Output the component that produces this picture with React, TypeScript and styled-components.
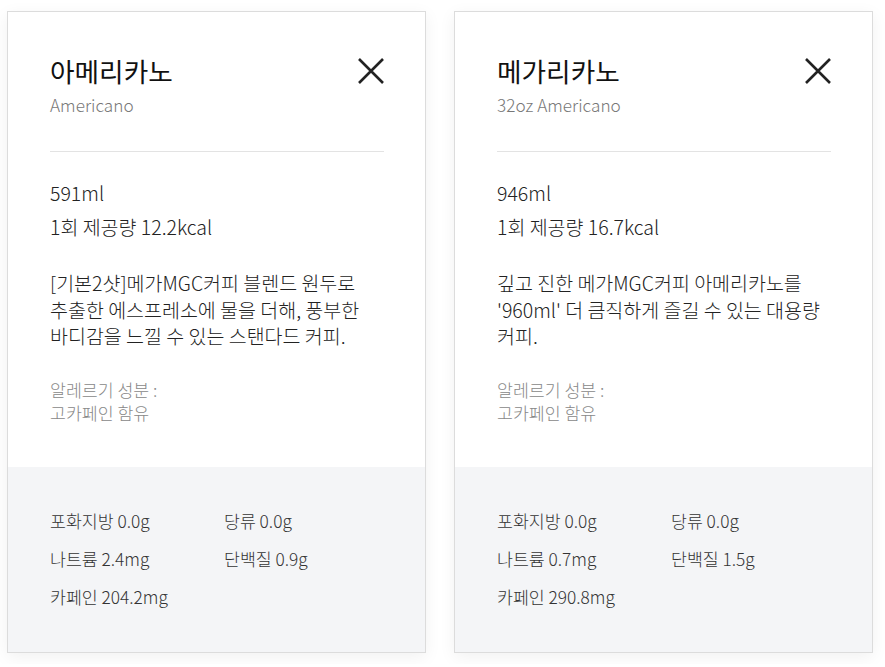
import React from "react";
import styled, { createGlobalStyle } from "styled-components";

const GlobalStyle = createGlobalStyle`
  html, body {
    margin: 0;
    padding: 0;
    background: #ffffff;
  }
  body {
    font-family: "Noto Sans CJK KR", "Noto Sans", sans-serif;
    color: #222;
  }
`;

type Menu = {
  name: string;
  engName: string;
  volume: string;
  kcal: string;
  desc: string;
  allergy: string;
  nutrition: string[];
};

const menus: Menu[] = [
  {
    name: "아메리카노",
    engName: "Americano",
    volume: "591ml",
    kcal: "1회 제공량 12.2kcal",
    desc: "[기본2샷]메가MGC커피 블렌드 원두로 추출한 에스프레소에 물을 더해, 풍부한 바디감을 느낄 수 있는 스탠다드 커피.",
    allergy: "고카페인 함유",
    nutrition: ["포화지방 0.0g", "당류 0.0g", "나트륨 2.4mg", "단백질 0.9g", "카페인 204.2mg"],
  },
  {
    name: "메가리카노",
    engName: "32oz Americano",
    volume: "946ml",
    kcal: "1회 제공량 16.7kcal",
    desc: "깊고 진한 메가MGC커피 아메리카노를 '960ml' 더 큼직하게 즐길 수 있는 대용량 커피.",
    allergy: "고카페인 함유",
    nutrition: ["포화지방 0.0g", "당류 0.0g", "나트륨 0.7mg", "단백질 1.5g", "카페인 290.8mg"],
  },
];

const Page = styled.div`
  display: flex;
  gap: 28px;
  padding: 11px 7px;
`;

const Card = styled.section`
  width: 419px;
  box-sizing: border-box;
  border: 1px solid #dcdcdc;
  background: #fff;
  box-shadow: 0 4px 16px rgba(0, 0, 0, 0.06);
  display: flex;
  flex-direction: column;
`;

const Top = styled.div`
  padding: 41px 41px 43px 42px;
`;

const Head = styled.div`
  display: flex;
  justify-content: space-between;
  align-items: flex-start;
  padding-bottom: 34px;
  border-bottom: 1px solid #e3e3e3;
`;

const Title = styled.h2`
  margin: 0;
  font-size: 26.7px;
  line-height: 36px;
  font-weight: 400;
  color: #111;
`;

const Sub = styled.div`
  margin-top: 4px;
  font-size: 17.2px;
  line-height: 24px;
  font-weight: 300;
  color: #777;
`;

const Close = styled.button`
  border: 0;
  background: none;
  padding: 0;
  margin-top: 5px;
  width: 26px;
  height: 26px;
  cursor: pointer;
  color: #222;
`;

const Info = styled.div`
  margin-top: 24px;
  font-size: 19.5px;
  line-height: 34px;
  font-weight: 300;
  color: #222;
`;

const Desc = styled.p`
  margin: 26px 0 0;
  font-size: 19.5px;
  line-height: 26.5px;
  font-weight: 300;
  color: #222;
  word-break: keep-all;
`;

const Allergy = styled.div`
  margin-top: 28px;
  font-size: 17.3px;
  line-height: 23px;
  font-weight: 300;
  color: #888;
`;

const Bottom = styled.div`
  flex: 1;
  background: #f4f5f7;
  padding: 35px 42px 36px;
`;

const NutriGrid = styled.ul`
  margin: 0;
  padding: 0;
  list-style: none;
  display: grid;
  grid-template-columns: 174px 174px;
`;

const Nutri = styled.li`
  font-size: 17.3px;
  line-height: 38px;
  font-weight: 300;
  color: #333;
`;

const CloseIcon = () => (
  <svg width="26" height="26" viewBox="0 0 26 26" fill="none">
    <path d="M1 1L25 25M25 1L1 25" stroke="currentColor" strokeWidth="2.6" />
  </svg>
);

const MenuCard = ({ menu }: { menu: Menu }) => (
  <Card>
    <Top>
      <Head>
        <div>
          <Title>{menu.name}</Title>
          <Sub>{menu.engName}</Sub>
        </div>
        <Close aria-label="닫기">
          <CloseIcon />
        </Close>
      </Head>
      <Info>
        <div>{menu.volume}</div>
        <div>{menu.kcal}</div>
      </Info>
      <Desc>{menu.desc}</Desc>
      <Allergy>
        <div>알레르기 성분 :</div>
        <div>{menu.allergy}</div>
      </Allergy>
    </Top>
    <Bottom>
      <NutriGrid>
        {menu.nutrition.map((n) => (
          <Nutri key={n}>{n}</Nutri>
        ))}
      </NutriGrid>
    </Bottom>
  </Card>
);

export default function App() {
  return (
    <>
      <GlobalStyle />
      <Page>
        {menus.map((m) => (
          <MenuCard key={m.name} menu={m} />
        ))}
      </Page>
    </>
  );
}
